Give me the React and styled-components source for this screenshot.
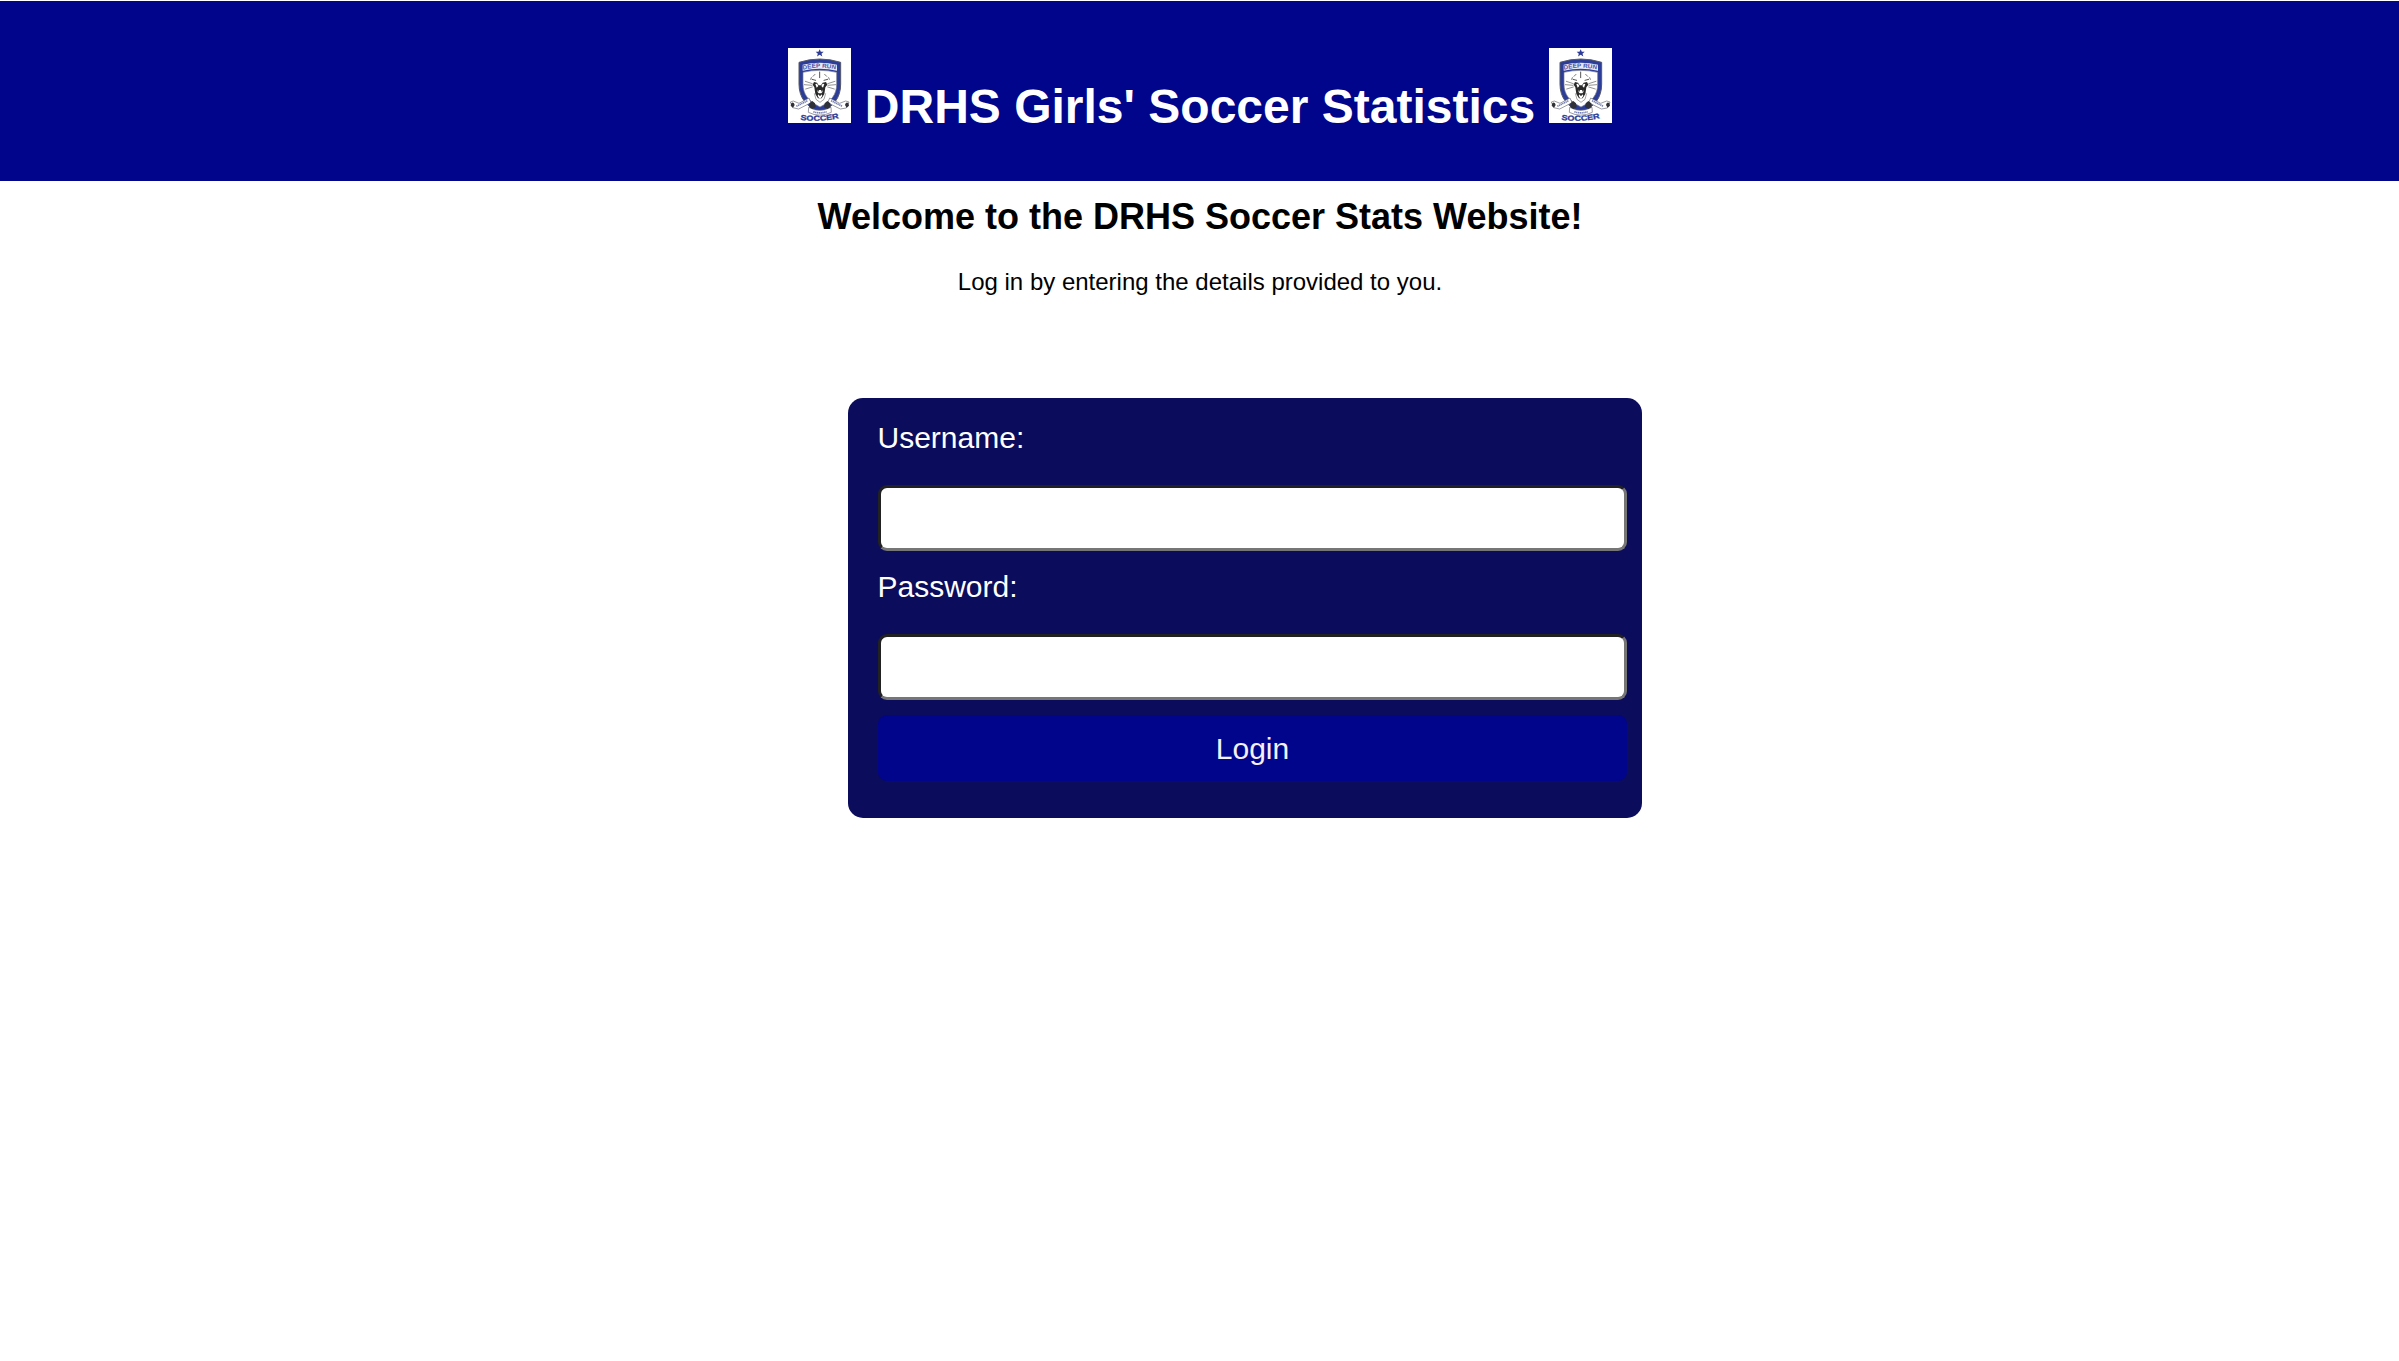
import React from "react";
import styled, { createGlobalStyle } from "styled-components";

const GlobalStyle = createGlobalStyle`
  *, *::before, *::after { box-sizing: border-box; }
  body {
    margin: 0;
    background: #fff;
    color: #000;
    font-family: Arial, "Liberation Sans", sans-serif;
  }
`;

const Page = styled.div`
  min-height: 100vh;
  padding-top: 1px;
`;

const Header = styled.header`
  height: 180px;
  padding: 47px 0 0 1px;
  background: #00058b;
  color: #fff;
  text-align: center;
`;

const Title = styled.h1`
  margin: 0;
  font-size: 48px;
  line-height: 54px;
  font-weight: bold;
`;

const Crest = styled.svg`
  display: inline-block;
  width: 63px;
  height: 75px;
  vertical-align: baseline;
  background: #fff;
`;

const Intro = styled.section`
  padding: 16px 0 0 1px;
  text-align: center;
`;

const Welcome = styled.h2`
  margin: 0 0 31px;
  font-size: 36px;
  line-height: 40px;
`;

const Hint = styled.p`
  margin: 0;
  font-size: 24px;
  line-height: 28px;
`;

const LoginForm = styled.form`
  display: flex;
  flex-direction: column;
  width: 794px;
  height: 420px;
  margin: 102px 0 0 848px;
  padding: 23px 15px 0 30px;
  border-radius: 15px;
  background: #0b0c5c;
`;

const Label = styled.label`
  margin: 0 0 30px -0.5px;
  color: #fff;
  font-size: 30px;
  line-height: 34px;
`;

const Field = styled.input`
  height: 66px;
  margin: 0 0 ${(p) => p.$gap}px;
  padding: 0 15px;
  border: 3px solid;
  border-color: #212121 #767676 #767676 #212121;
  border-radius: 9px;
  background: #fff;
  font: 30px Arial, "Liberation Sans", sans-serif;
  outline: none;
`;

const Submit = styled.button`
  height: 66px;
  padding: 2px 0 0;
  border: 0;
  border-radius: 9px;
  background: #00058b;
  color: #f5f0f5;
  font: 30px/34px Arial, "Liberation Sans", sans-serif;
`;

function Logo({ id }) {
  return (
    <Crest viewBox="24 24 189 225" role="img" aria-label="Deep Run Soccer">
      <defs>
        <path id={`${id}-top`} d="M69 89Q119 77 170 89" />
        <path id={`${id}-bottom`} d="M61 239Q119 248 180 234" />
      </defs>
      {/* star */}
      <path fill="#2d3c98" d="M119 28l3.5 7.5h8.5l-6.500 5.500 2.500 8.500-8-5-8 5 2.500-8.500-6.500-5.500h8.500z" />
      {/* shield */}
      <path d="M57 67Q119 47 182 67V132C182 174 160 201 120 217C80 201 57 174 57 132Z" fill="#2b3d98" stroke="#555866" strokeWidth="3" />
      <path d="M69 97Q119 85 170 97V132C170 164 154 184 120 201C86 184 69 164 69 132Z" fill="#fff" stroke="#777b91" strokeWidth="2" />
      <path d="M68 74Q119 63 171 74V92Q119 80 68 92Z" fill="#e8e9f7" />
      <text fill="#4653a6" fontFamily="Liberation Sans, sans-serif" fontSize="18" fontWeight="bold">
        <textPath href={`#${id}-top`} textLength="99" lengthAdjust="spacingAndGlyphs">DEEP RUN</textPath>
      </text>
      {/* panther: brow, eyes, whiskers */}
      <g fill="none" stroke="#333" strokeWidth="2.5" strokeLinecap="round">
        <path d="M119 96v17" />
        <path d="M105 103l-6 6M134 103l6 6M94 113l-2 5M146 113l2 5" strokeWidth="2" />
        <path d="M96 118l11 3M143 118l-11 3" />
        <path d="M97 131L76 124M96 136l-23-2M97 141l-20 6M143 131l22-7M144 136l23-2M143 141l20 6" strokeWidth="1.6" />
      </g>
      {/* panther: muzzle and open jaw */}
      <path d="M102 126l9 2 5 8h7l5-8 10-2 4 8-6 8-3 20-8 13h-11l-8-13-3-20-5-8z" fill="#292929" />
      <path d="M106 132l5-1 4 7-5 5zM133 132l-5-1-4 7 5 5zM111 148l3 9 3-7h6l3 7 3-9-1 7-4 5h-8l-4-5zM113 167l3-4 2 4h4l2-4 3 4-4 7h-6z" fill="#fff" />
      <path d="M103 160l5 18 12 9 12-9 5-18" fill="none" stroke="#777" strokeWidth="2" />
      {/* ribbon */}
      <g stroke="#686979" strokeWidth="2">
        <path d="M31 186l7 17 18 4 37-19-6-14-30 16-17-7z" fill="#fff" />
        <path d="M207 186l-8 18-18 3-38-19 6-14 30 16 18-7z" fill="#fff" />
        <path d="M86 202Q119 220 153 202l1 15Q119 234 85 217Z" fill="#fff" />
      </g>
      <path d="M34 189q8-5 10 6l-5 8-7-6zM205 189q-8-5-10 6l5 8 7-6zM88 190l9-7 8 7 2 12-10 5-9-5zM151 190l-9-7-8 7-2 12 10 5 9-5z" fill="#303038" />
      <g fill="none" stroke="#7580b9" strokeWidth="5" strokeDasharray="4 1.5">
        <path d="M49 199l34-17M153 182l34 17M100 215q20 7 40 0" />
      </g>
      <text fill="#2d3a94" stroke="#2d3a94" strokeWidth=".8" fontFamily="Liberation Sans, sans-serif" fontSize="22" fontWeight="bold">
        <textPath href={`#${id}-bottom`} textLength="117" lengthAdjust="spacingAndGlyphs">SOCCER</textPath>
      </text>
    </Crest>
  );
}

export default function App() {
  return (
    <Page>
      <GlobalStyle />
      <Header>
        <Title>
          <Logo id="left" /> DRHS Girls' Soccer Statistics <Logo id="right" />
        </Title>
      </Header>
      <Intro>
        <Welcome>Welcome to the DRHS Soccer Stats Website!</Welcome>
        <Hint>Log in by entering the details provided to you.</Hint>
      </Intro>
      <LoginForm onSubmit={(e) => e.preventDefault()}>
        <Label htmlFor="username">Username:</Label>
        <Field id="username" type="text" $gap={19} />
        <Label htmlFor="password">Password:</Label>
        <Field id="password" type="password" $gap={15} />
        <Submit type="submit">Login</Submit>
      </LoginForm>
    </Page>
  );
}
